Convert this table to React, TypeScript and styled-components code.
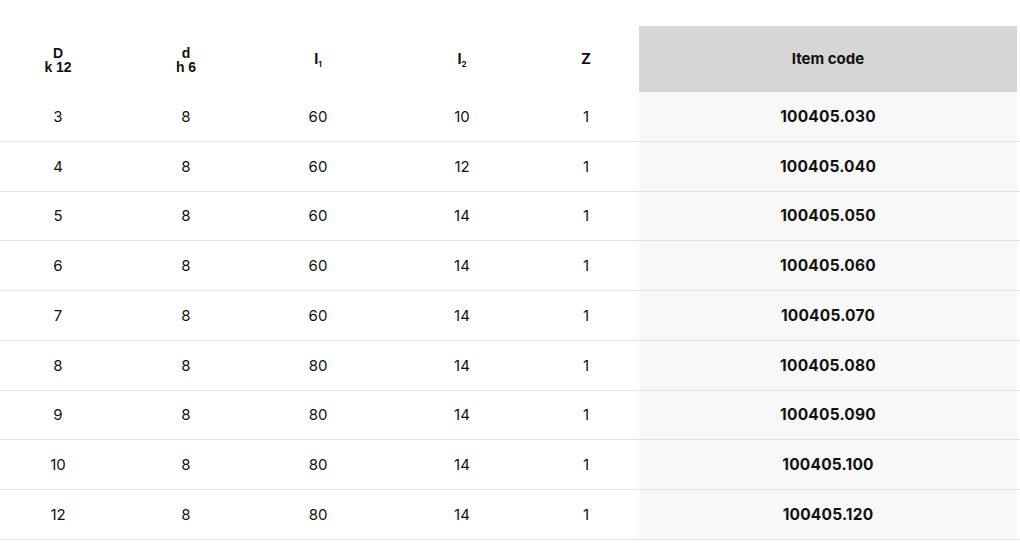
import React from 'react'
import styled, { createGlobalStyle } from 'styled-components'

const GlobalStyle = createGlobalStyle`
  html, body {
    margin: 0;
    padding: 0;
    background: #ffffff;
  }
  body {
    font-family: Inter, "Liberation Sans", sans-serif;
    color: #111111;
  }
`

const cols = '116px 140px 124px 164px 95px 378px 3px'

const Wrapper = styled.main`
  padding-top: 26px;
  width: 1020px;
`

const HeadRow = styled.div`
  display: grid;
  grid-template-columns: ${cols};
  height: 66px;
`

const BodyRow = styled.div`
  display: grid;
  grid-template-columns: ${cols};
  height: 49.75px;
  box-sizing: border-box;
  border-bottom: 1px solid #e2e2e2;
`

const HeadCell = styled.div<{ $shade?: boolean; $pad?: number }>`
  display: flex;
  align-items: center;
  justify-content: center;
  text-align: center;
  font-size: 15px;
  font-weight: 700;
  line-height: 15px;
  padding-right: ${(p) => p.$pad ?? 0}px;
  padding-bottom: 2px;
  background: ${(p) => (p.$shade ? '#d6d6d6' : 'transparent')};
`

const SerifHead = styled.span`
  font-family: "Liberation Sans", Arial, sans-serif;
  font-size: 14px;
  font-weight: 700;
  line-height: 14px;
  margin-top: 3px;
`

const Sub = styled.sub`
  font-size: 8px;
  vertical-align: -3px;
  line-height: 0;
`

const Cell = styled.div<{ $pad?: number }>`
  display: flex;
  align-items: center;
  justify-content: center;
  font-size: 15px;
  font-weight: 400;
  padding-right: ${(p) => p.$pad ?? 0}px;
`

const CodeCell = styled.div`
  display: flex;
  align-items: center;
  justify-content: center;
  font-size: 15.5px;
  font-weight: 700;
  letter-spacing: 0.2px;
  background: #f8f8f8;
`

const rows = [
  ['3', '8', '60', '10', '1', '100405.030'],
  ['4', '8', '60', '12', '1', '100405.040'],
  ['5', '8', '60', '14', '1', '100405.050'],
  ['6', '8', '60', '14', '1', '100405.060'],
  ['7', '8', '60', '14', '1', '100405.070'],
  ['8', '8', '80', '14', '1', '100405.080'],
  ['9', '8', '80', '14', '1', '100405.090'],
  ['10', '8', '80', '14', '1', '100405.100'],
  ['12', '8', '80', '14', '1', '100405.120'],
]

const App = () => {
  return (
    <Wrapper>
      <GlobalStyle />
      <HeadRow>
        <HeadCell>
          <SerifHead>D<br />k 12</SerifHead>
        </HeadCell>
        <HeadCell>
          <SerifHead>d<br />h 6</SerifHead>
        </HeadCell>
        <HeadCell>
          <span>l<Sub>1</Sub></span>
        </HeadCell>
        <HeadCell>
          <span>l<Sub>2</Sub></span>
        </HeadCell>
        <HeadCell $pad={11}>Z</HeadCell>
        <HeadCell $shade>Item code</HeadCell>
        <div />
      </HeadRow>
      {rows.map((r) => (
        <BodyRow key={r[5]}>
          <Cell>{r[0]}</Cell>
          <Cell>{r[1]}</Cell>
          <Cell>{r[2]}</Cell>
          <Cell>{r[3]}</Cell>
          <Cell $pad={11}>{r[4]}</Cell>
          <CodeCell>{r[5]}</CodeCell>
          <div />
        </BodyRow>
      ))}
    </Wrapper>
  )
}

export default App
